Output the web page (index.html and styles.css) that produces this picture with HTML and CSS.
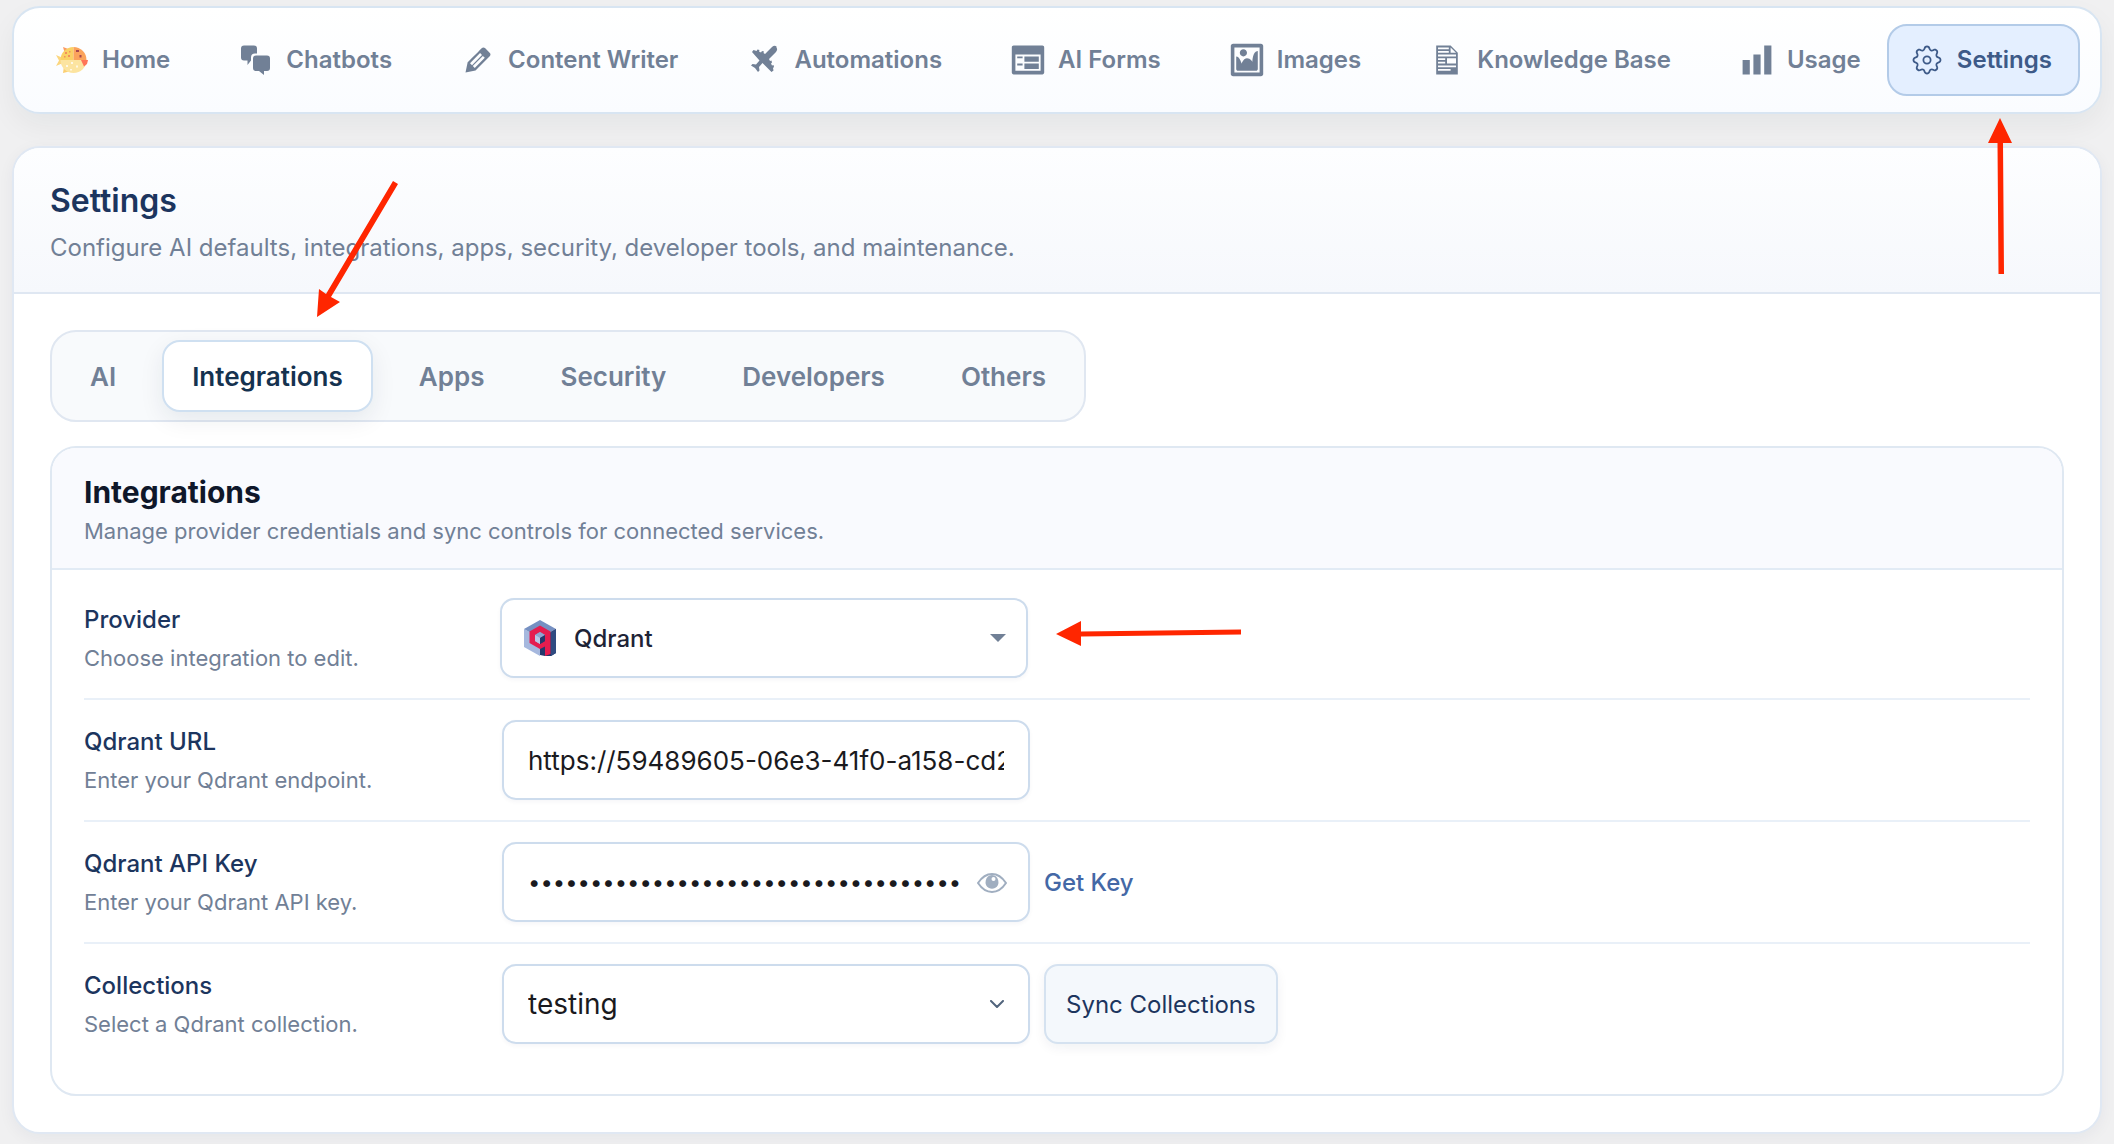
FILE: index.html
```html
<!DOCTYPE html>
<html lang="en">
<head>
<meta charset="utf-8">
<meta name="viewport" content="width=device-width, initial-scale=1">
<title>Settings</title>
<link rel="stylesheet" href="styles.css">
</head>
<body>
<nav class="topnav" aria-label="Main">
  <div class="topnav-links">
    <a class="nav-link" href="#home">
      <svg class="nav-icon" viewBox="0 0 36 36" aria-hidden="true">
        <path fill="#fbd67f" d="M2 13l7 3v5l-7 3 3-5.500z"/>
        <path fill="#fb9a62" d="M9 5l8 3-6 4z"/>
        <path fill="#fbcf72" d="M9 31l1-7 7 5z"/>
        <path fill="#fad165" d="M6.500 18A13 13 0 0 1 19.500 5v13z"/>
        <path fill="#fba35c" d="M19.500 5a13 13 0 0 1 13 13h-13z"/>
        <path fill="#fce4a0" d="M6.500 18a13 13 0 0 0 26 0z"/>
        <path fill="#ff7458" d="M27 18h7l-1 4-3 2.500z"/>
        <path fill="#a8474e" d="M22 8h3v2h-3zM25.500 13h2v2.500h-2z"/>
        <path fill="#f2915a" d="M11 10h2v2h-2zM14 13h2v2h-2zM10 14h1.500v1.500H10zM15 9h1.500v1.500H15z"/>
        <path fill="#fff8e3" d="M12 23h2v2h-2zM17 20h2v2h-2zM22 23.500h2v2h-2zM16 27h2v1.500h-2z"/>
      </svg>Home</a>
    <a class="nav-link" href="#chatbots">
      <svg class="nav-icon" viewBox="0 0 36 36" aria-hidden="true">
        <path d="M6 3.500h10a3 3 0 0 1 3 3v5h-2a4 4 0 0 0-4 4v3L9.500 23v-4.500H6a3 3 0 0 1-3-3v-9a3 3 0 0 1 3-3z"/>
        <path d="M18 13.500h11a3 3 0 0 1 3 3V26a3 3 0 0 1-3 3h-3v4l-5-4h-3a3 3 0 0 1-3-3v-9.500a3 3 0 0 1 3-3z"/>
      </svg>Chatbots</a>
    <a class="nav-link" href="#content-writer">
      <svg class="nav-icon" viewBox="0 0 20 20" aria-hidden="true"><path d="M13.890 3.390l2.710 2.720c.46.46.42 1.240.03 1.640l-8.010 8.020-5.560 1.160 1.160-5.580s7.600-7.630 7.990-8.030c.39-.39 1.220-.39 1.680.07zm-2.730 2.790l-5.590 5.610 1.110 1.110 5.540-5.650zm-2.970 8.230l5.580-5.600-1.070-1.080-5.590 5.600z"/></svg>Content Writer</a>
    <a class="nav-link" href="#automations">
      <svg class="nav-icon" viewBox="0 0 36 36" aria-hidden="true"><path d="M30.500 5.500q1.500 2-.5 4.500l-7 7 1 2 1.500-.5.5 2-1 1 1 2 1.500-.5.5 2-1 1 .5 2.500-2 1.500-9-9-3.500 4 .5 3.500-1.500 1.500-3-4-4-2.500 1.500-1.500 3.500.5 3.500-4L6 10l1.500-2 3 1 1-1.500 2 .5-.5 1.500 2 1 1-1.500 2 .5-.5 1.500 1.500 1 7-7q2.500-2 4.500-.500z"/></svg>Automations</a>
    <a class="nav-link" href="#ai-forms">
      <svg class="nav-icon" viewBox="0 0 20 20" aria-hidden="true"><path d="M2 2h16c.55 0 1 .45 1 1v14c0 .55-.45 1-1 1H2c-.55 0-1-.45-1-1V3c0-.55.45-1 1-1zm15 14V7H3v9h14zM4 8v1h3V8H4zm4 0v3h8V8H8zm-4 4v1h3v-1H4zm4 0v3h8v-3H8z"/></svg>AI Forms</a>
    <a class="nav-link" href="#images">
      <svg class="nav-icon" viewBox="0 0 20 20" aria-hidden="true"><path d="M2.250 1h15.500c.69 0 1.250.56 1.250 1.250v15.500c0 .69-.56 1.250-1.250 1.250H2.250C1.560 19 1 18.440 1 17.750V2.250C1 1.560 1.560 1 2.250 1zM17 17V3H3v14h14zM10 6c0-1.100-.9-2-2-2s-2 .9-2 2 .9 2 2 2 2-.9 2-2zm3 5s0-6 3-6v10c0 .55-.45 1-1 1H5c-.55 0-1-.45-1-1V8c2 0 3 4 3 4s1-3 3-3 3 2 3 2z"/></svg>Images</a>
    <a class="nav-link" href="#knowledge-base">
      <svg class="nav-icon" viewBox="0 0 20 20" aria-hidden="true"><path d="M12 2l4 4v12H4V2h8zM5 3v1h6V3H5zm7 3h3l-3-3v3zM5 5v1h6V5H5zm10 3V7H5v1h10zM5 9v1h4V9H5zm10 3V9h-5v3h5zM5 11v1h4v-1H5zm10 3v-1H5v1h10zm-3 2v-1H5v1h7z"/></svg>Knowledge Base</a>
    <a class="nav-link" href="#usage">
      <svg class="nav-icon" viewBox="0 0 20 20" aria-hidden="true"><path d="M18 18V2h-4v16h4zm-6 0V7H8v11h4zm-6 0v-8H2v8h4z"/></svg>Usage</a>
  </div>
  <a class="nav-link nav-link-active" href="#settings" aria-current="page">
    <svg class="nav-icon" viewBox="-2 -2 20 20" aria-hidden="true">
      <circle cx="8" cy="8" r="2" fill="none" stroke="currentColor"/>
      <path d="M9.796 1.343c-.527-1.790-3.065-1.790-3.592 0l-.094.319a.873.873 0 0 1-1.255.52l-.292-.16c-1.640-.892-3.433.902-2.540 2.541l.159.292a.873.873 0 0 1-.52 1.255l-.319.094c-1.790.527-1.790 3.065 0 3.592l.319.094a.873.873 0 0 1 .52 1.255l-.16.292c-.892 1.640.901 3.434 2.541 2.540l.292-.159a.873.873 0 0 1 1.255.52l.094.319c.527 1.790 3.065 1.790 3.592 0l.094-.319a.873.873 0 0 1 1.255-.52l.292.16c1.640.893 3.434-.902 2.540-2.541l-.159-.292a.873.873 0 0 1 .52-1.255l.319-.094c1.790-.527 1.790-3.065 0-3.592l-.319-.094a.873.873 0 0 1-.52-1.255l.16-.292c.893-1.640-.902-3.433-2.541-2.540l-.292.159a.873.873 0 0 1-1.255-.52l-.094-.319zm-2.633.283c.246-.835 1.428-.835 1.674 0l.094.319a1.873 1.873 0 0 0 2.693 1.115l.291-.16c.764-.415 1.600.42 1.184 1.185l-.159.292a1.873 1.873 0 0 0 1.116 2.692l.318.094c.835.246.835 1.428 0 1.674l-.319.094a1.873 1.873 0 0 0-1.115 2.693l.16.291c.415.764-.42 1.600-1.185 1.184l-.291-.159a1.873 1.873 0 0 0-2.693 1.116l-.094.318c-.246.835-1.428.835-1.674 0l-.094-.319a1.873 1.873 0 0 0-2.692-1.115l-.292.16c-.764.415-1.600-.42-1.184-1.185l.159-.291A1.873 1.873 0 0 0 1.945 8.930l-.319-.094c-.835-.246-.835-1.428 0-1.674l.319-.094A1.873 1.873 0 0 0 3.060 4.377l-.16-.292c-.415-.764.42-1.600 1.185-1.184l.292.159a1.873 1.873 0 0 0 2.692-1.115l.094-.319z"/>
    </svg>Settings
    <svg class="arrow arrow-up" viewBox="0 0 26 157" aria-hidden="true"><path d="M12 0l12 25h-9l1 131h-5.500l-1-131H0z"/></svg>
  </a>
</nav>

<main class="page-card">
  <header class="page-header">
    <h1 class="page-title">Settings</h1>
    <p class="page-subtitle">Configure AI defaults, integrations, apps, security, developer tools, and maintenance.</p>
  </header>
  <div class="page-body">
    <div class="tabs" role="tablist">
      <button class="tab" type="button" role="tab">AI</button>
      <button class="tab tab-active" type="button" role="tab" aria-selected="true">Integrations
        <svg class="arrow arrow-diagonal" viewBox="0 0 82 136" aria-hidden="true"><path d="M0 136l2-28 7 5L76 0l5 3-67 113 9 5z"/></svg>
      </button>
      <button class="tab" type="button" role="tab">Apps</button>
      <button class="tab" type="button" role="tab">Security</button>
      <button class="tab" type="button" role="tab">Developers</button>
      <button class="tab" type="button" role="tab">Others</button>
    </div>

    <section class="panel">
      <header class="panel-header">
        <h2 class="panel-title">Integrations</h2>
        <p class="panel-text">Manage provider credentials and sync controls for connected services.</p>
      </header>
      <div class="panel-body">
        <div class="row">
          <div class="row-info">
            <label class="row-label" for="provider">Provider</label>
            <p class="row-help">Choose integration to edit.</p>
          </div>
          <div class="row-control">
            <div class="field">
              <svg class="provider-logo" viewBox="0 0 32 36" aria-hidden="true">
                <path fill="#a6b8de" d="M0 9l16 9v18L0 27z"/>
                <path fill="#7690c2" d="M16 0l16 9-16 9L0 9z"/>
                <path fill="#24386c" d="M16 18L32 9v24l-5 3h-6l-5-1z"/>
                <path fill="#e51d4f" fill-rule="evenodd" d="M16 5.500l10.500 6V34L21 36V26.500l-5 2.500-10.500-6V11.500zM16 12l-5 3v6l5 3 5-3v-6z"/>
                <path fill="#2f4b80" d="M27 12l5-3v24l-5 3z"/>
                <path fill="#8fa5d0" d="M16 12l5 3-5 3-5-3z"/>
                <path fill="#b9c7e6" d="M11 15l5 3v6l-5-3z"/>
                <path fill="#24386c" d="M16 18l5-3v6l-5 3z"/>
              </svg>
              <select class="control control-provider" id="provider"><option>Qdrant</option></select>
              <svg class="field-caret" viewBox="0 0 16 8" aria-hidden="true"><path fill="#718096" d="M0 0h16L8 8z"/></svg>
              <svg class="arrow arrow-left" viewBox="0 0 186 26" aria-hidden="true"><path d="M0 13L25 0v10.500l160-2v5l-160 2V25z"/></svg>
            </div>
          </div>
        </div>
        <div class="row">
          <div class="row-info">
            <label class="row-label" for="url">Qdrant URL</label>
            <p class="row-help">Enter your Qdrant endpoint.</p>
          </div>
          <div class="row-control row-control-inset">
            <div class="field"><input class="control" id="url" type="text" value="https://59489605-06e3-41f0-a158-cd2b7e4410c9.cloud.qdrant.io"></div>
          </div>
        </div>
        <div class="row">
          <div class="row-info">
            <label class="row-label" for="key">Qdrant API Key</label>
            <p class="row-help">Enter your Qdrant API key.</p>
          </div>
          <div class="row-control row-control-inset">
            <div class="field">
              <input class="control control-secret" id="key" type="password" value="0123456789012345678901234567890123456789012345">
              <button class="reveal" type="button" aria-label="Show key">
                <svg viewBox="0 0 30 20" aria-hidden="true">
                  <path fill="none" stroke="#a0aec0" stroke-width="2" d="M1 10Q7 1 15 1t14 9q-6 9-14 9T1 10z"/>
                  <path fill="#a0aec0" d="M15 2a7 7 0 0 0-3 13 7 7 0 0 0 6 0 7 7 0 0 0-3-13z"/>
                  <ellipse cx="16.500" cy="6" rx="2" ry="2" fill="#fff"/>
                </svg>
              </button>
            </div>
            <a class="key-link" href="#get-key">Get Key</a>
          </div>
        </div>
        <div class="row">
          <div class="row-info">
            <label class="row-label" for="collection">Collections</label>
            <p class="row-help">Select a Qdrant collection.</p>
          </div>
          <div class="row-control row-control-inset">
            <div class="field">
              <select class="control control-collection" id="collection"><option>testing</option></select>
              <svg class="field-caret field-caret-thin" viewBox="0 0 16 8" aria-hidden="true"><path fill="none" stroke="#52657d" stroke-width="2" stroke-linecap="round" stroke-linejoin="round" d="M2 1l6 6 6-6"/></svg>
            </div>
            <button class="sync" type="button">Sync Collections</button>
          </div>
        </div>
      </div>
    </section>
  </div>
</main>
</body>
</html>
```

FILE: styles.css
```css
* {
  box-sizing: border-box;
}

body {
  margin: 0;
  padding: 6px 12px 10px;
  background: #f0f0f1;
  color: #718096;
  font-family: Inter, "Liberation Sans", sans-serif;
  font-size: 24px;
}

h1, h2, p {
  margin: 0;
}

button, input, select {
  font-family: inherit;
}

/* Top navigation */
.topnav {
  display: flex;
  align-items: center;
  padding: 16px 20px 16px 18px;
  border: 2px solid #d8e5f2;
  border-radius: 28px;
  background: linear-gradient(#ffffff, #fafcff);
  box-shadow: 0 12px 28px rgba(15, 35, 30, 0.05);
}

.topnav-links {
  display: flex;
  flex: 1;
  justify-content: space-between;
}

.nav-link {
  position: relative;
  display: flex;
  align-items: center;
  gap: 12px;
  height: 72px;
  padding: 0 24px 0 20px;
  border: 2px solid transparent;
  border-radius: 20px;
  color: #718096;
  font-weight: 600;
  line-height: 32px;
  text-decoration: none;
  white-space: nowrap;
}

.nav-link-active {
  padding-right: 26px;
  border-color: #b3cbe8;
  background: #e4efff;
  color: #3d5a88;
}

.nav-icon {
  width: 36px;
  height: 36px;
  fill: currentColor;
}

/* Settings page card */
.page-card {
  margin-top: 32px;
  border: 2px solid #e0e8f3;
  border-radius: 28px;
  background: #ffffff;
  box-shadow: 0 4px 16px rgba(15, 35, 70, 0.05);
}

.page-header {
  padding: 33px 36px 27px;
  border-bottom: 2px solid #dfe7f2;
  border-radius: 26px 26px 0 0;
  background: linear-gradient(#fdfeff, #f6f8fc);
}

.page-title {
  color: #1c355e;
  font-size: 32px;
  font-weight: 600;
  line-height: 40px;
}

.page-subtitle {
  margin-top: 10px;
  line-height: 34px;
}

.page-body {
  padding: 36px;
}

/* Section tabs */
.tabs {
  display: flex;
  gap: 16px;
  width: fit-content;
  padding: 8px;
  border: 2px solid #e0e7f1;
  border-radius: 26px;
  background: #f8fafc;
}

.tab {
  position: relative;
  height: 72px;
  padding: 0 28px;
  border: 2px solid transparent;
  border-radius: 18px;
  background: none;
  color: #718096;
  font-size: 26px;
  font-weight: 600;
}

.tab-active {
  border-color: #cfe0f1;
  background: #ffffff;
  box-shadow: 0 8px 24px rgba(15, 35, 70, 0.08);
  color: #15324f;
}

/* Integrations panel */
.panel {
  margin-top: 24px;
  border: 2px solid #dfe8f2;
  border-radius: 26px;
}

.panel-header {
  padding: 26px 32px 21px;
  border-bottom: 2px solid #e2ebf5;
  border-radius: 24px 24px 0 0;
  background: #f9fafe;
}

.panel-title {
  color: #0f172a;
  font-size: 30px;
  font-weight: 700;
  line-height: 36px;
}

.panel-text {
  margin-top: 5px;
  font-size: 22px;
  line-height: 32px;
}

.panel-body {
  padding: 8px 32px 30px;
}

.row {
  display: flex;
  align-items: center;
  padding: 20px 0;
  border-bottom: 2px solid #e9f0f8;
}

.row:last-child {
  border-bottom: 0;
}

.row-info {
  width: 416px;
}

.row-label {
  display: block;
  color: #1c355e;
  font-weight: 500;
  line-height: 32px;
}

.row-help {
  margin-top: 7px;
  font-size: 22px;
  line-height: 30px;
}

.row-control {
  display: flex;
  align-items: center;
  gap: 14px;
}

.row-control-inset {
  margin-left: 2px;
}

.field {
  position: relative;
  width: 528px;
}

.control {
  display: block;
  width: 100%;
  height: 80px;
  padding: 0 24px;
  border: 2px solid #cddced;
  border-radius: 14px;
  background: #ffffff;
  box-shadow: 0 2px 4px rgba(15, 35, 70, 0.04);
  color: #1a1a1e;
  font-size: 26px;
  appearance: none;
}

.control-provider {
  padding-left: 72px;
  color: #1e2336;
  font-size: 24px;
  font-weight: 500;
}

.control-secret {
  padding-right: 68px;
  font-size: 22px;
}

.control-collection {
  font-size: 28px;
}

.provider-logo {
  position: absolute;
  top: 22px;
  left: 24px;
  width: 32px;
  height: 36px;
}

.field-caret {
  position: absolute;
  top: 36px;
  right: 22px;
  width: 16px;
  height: 8px;
}

.field-caret-thin {
  right: 25px;
}

.reveal {
  position: absolute;
  top: 31px;
  right: 23px;
  width: 30px;
  height: 20px;
  padding: 0;
  border: 0;
  background: none;
}

.reveal svg {
  display: block;
}

.key-link {
  color: #4468a6;
  font-weight: 500;
  text-decoration: none;
}

.sync {
  height: 80px;
  padding: 0 20px;
  border: 2px solid #d5e2f0;
  border-radius: 14px;
  background: #f4f8fc;
  box-shadow: 0 4px 12px rgba(15, 35, 70, 0.06);
  color: #1c355e;
  font-size: 24px;
}

/* Callout arrows drawn over the page */
.arrow {
  position: absolute;
  z-index: 1;
  fill: #ff2600;
  pointer-events: none;
}

.arrow-up {
  top: 92px;
  right: 64px;
  width: 26px;
  height: 157px;
}

.arrow-diagonal {
  bottom: 93px;
  left: 153px;
  width: 82px;
  height: 136px;
}

.arrow-left {
  top: 23px;
  left: 556px;
  width: 186px;
  height: 26px;
}
```
